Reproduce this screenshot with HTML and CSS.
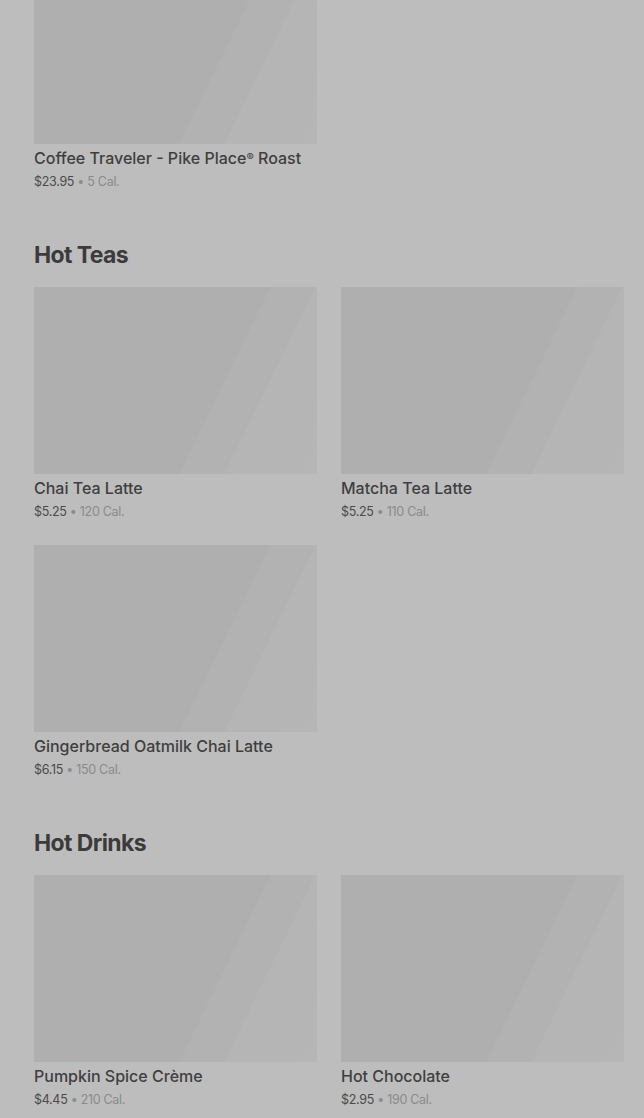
FILE: index.html
```html
<!DOCTYPE html>
<html lang="en">
<head>
  <meta charset="UTF-8" />
  <meta name="viewport" content="width=device-width, initial-scale=1.0" />
  <title>Menu</title>
  <link rel="stylesheet" href="styles.css">
</head>

<body>
  <div class="menu">
    <section class="category category-first">
      <div class="product-grid">
        <div class="product">
          <div class="product-image"></div>
          <div class="product-name">Coffee Traveler - Pike Place<span class="reg">®</span> Roast</div>
          <div class="product-meta"><span class="price">$23.95</span> • <span class="cal">5 Cal.</span></div>
        </div>
      </div>
    </section>

    <section class="category">
      <h2 class="category-title">Hot Teas</h2>
      <div class="product-grid">
        <div class="product">
          <div class="product-image"></div>
          <div class="product-name">Chai Tea Latte</div>
          <div class="product-meta"><span class="price">$5.25</span> • <span class="cal">120 Cal.</span></div>
        </div>
        <div class="product">
          <div class="product-image"></div>
          <div class="product-name">Matcha Tea Latte</div>
          <div class="product-meta"><span class="price">$5.25</span> • <span class="cal">110 Cal.</span></div>
        </div>
        <div class="product">
          <div class="product-image"></div>
          <div class="product-name">Gingerbread Oatmilk Chai Latte</div>
          <div class="product-meta"><span class="price">$6.15</span> • <span class="cal">150 Cal.</span></div>
        </div>
      </div>
    </section>

    <section class="category">
      <h2 class="category-title">Hot Drinks</h2>
      <div class="product-grid">
        <div class="product">
          <div class="product-image"></div>
          <div class="product-name">Pumpkin Spice Crème</div>
          <div class="product-meta"><span class="price">$4.45</span> • <span class="cal">210 Cal.</span></div>
        </div>
        <div class="product">
          <div class="product-image"></div>
          <div class="product-name">Hot Chocolate</div>
          <div class="product-meta"><span class="price">$2.95</span> • <span class="cal">190 Cal.</span></div>
        </div>
      </div>
    </section>
  </div>
</body>
</html>
```

FILE: styles.css
```css
body {
  margin: 0;
  padding: 0;
  background: #bdbdbd;
  color: #3d3d3d;
  font-family: 'Inter', 'Liberation Sans', sans-serif;
  overflow: hidden;
}

.menu {
  padding: 0 20px 0 34px;
  margin-top: -43px;
}

.category {
  padding-bottom: 50px;
}

.category-title {
  margin: 0 0 18px;
  font-size: 23px;
  line-height: 28px;
  font-weight: 700;
  letter-spacing: -0.6px;
  color: #3b3b3b;
}

.product-grid {
  display: grid;
  grid-template-columns: 283px 283px;
  column-gap: 24px;
  row-gap: 24px;
}

.product-image {
  height: 187px;
  background: linear-gradient(116deg, #afafaf 63%, #b2b2b2 63.5%, #b2b2b2 75%, #b5b5b5 75.5%, #b6b6b6 100%);
}

.product-name {
  margin-top: 4px;
  height: 20px;
  font-size: 16px;
  line-height: 20px;
  font-weight: 500;
  color: #3f3f3f;
  letter-spacing: 0;
}

.product-name .reg {
  font-size: 11px;
  position: relative;
  top: -3px;
}

.product-meta {
  margin-top: 5px;
  font-size: 12.5px;
  line-height: 18px;
  color: #8c8c8c;
  letter-spacing: -0.3px;
}

.product-meta .price {
  color: #4a4a4a;
}

.product-meta .cal {
  color: #8a8a8a;
}
```
